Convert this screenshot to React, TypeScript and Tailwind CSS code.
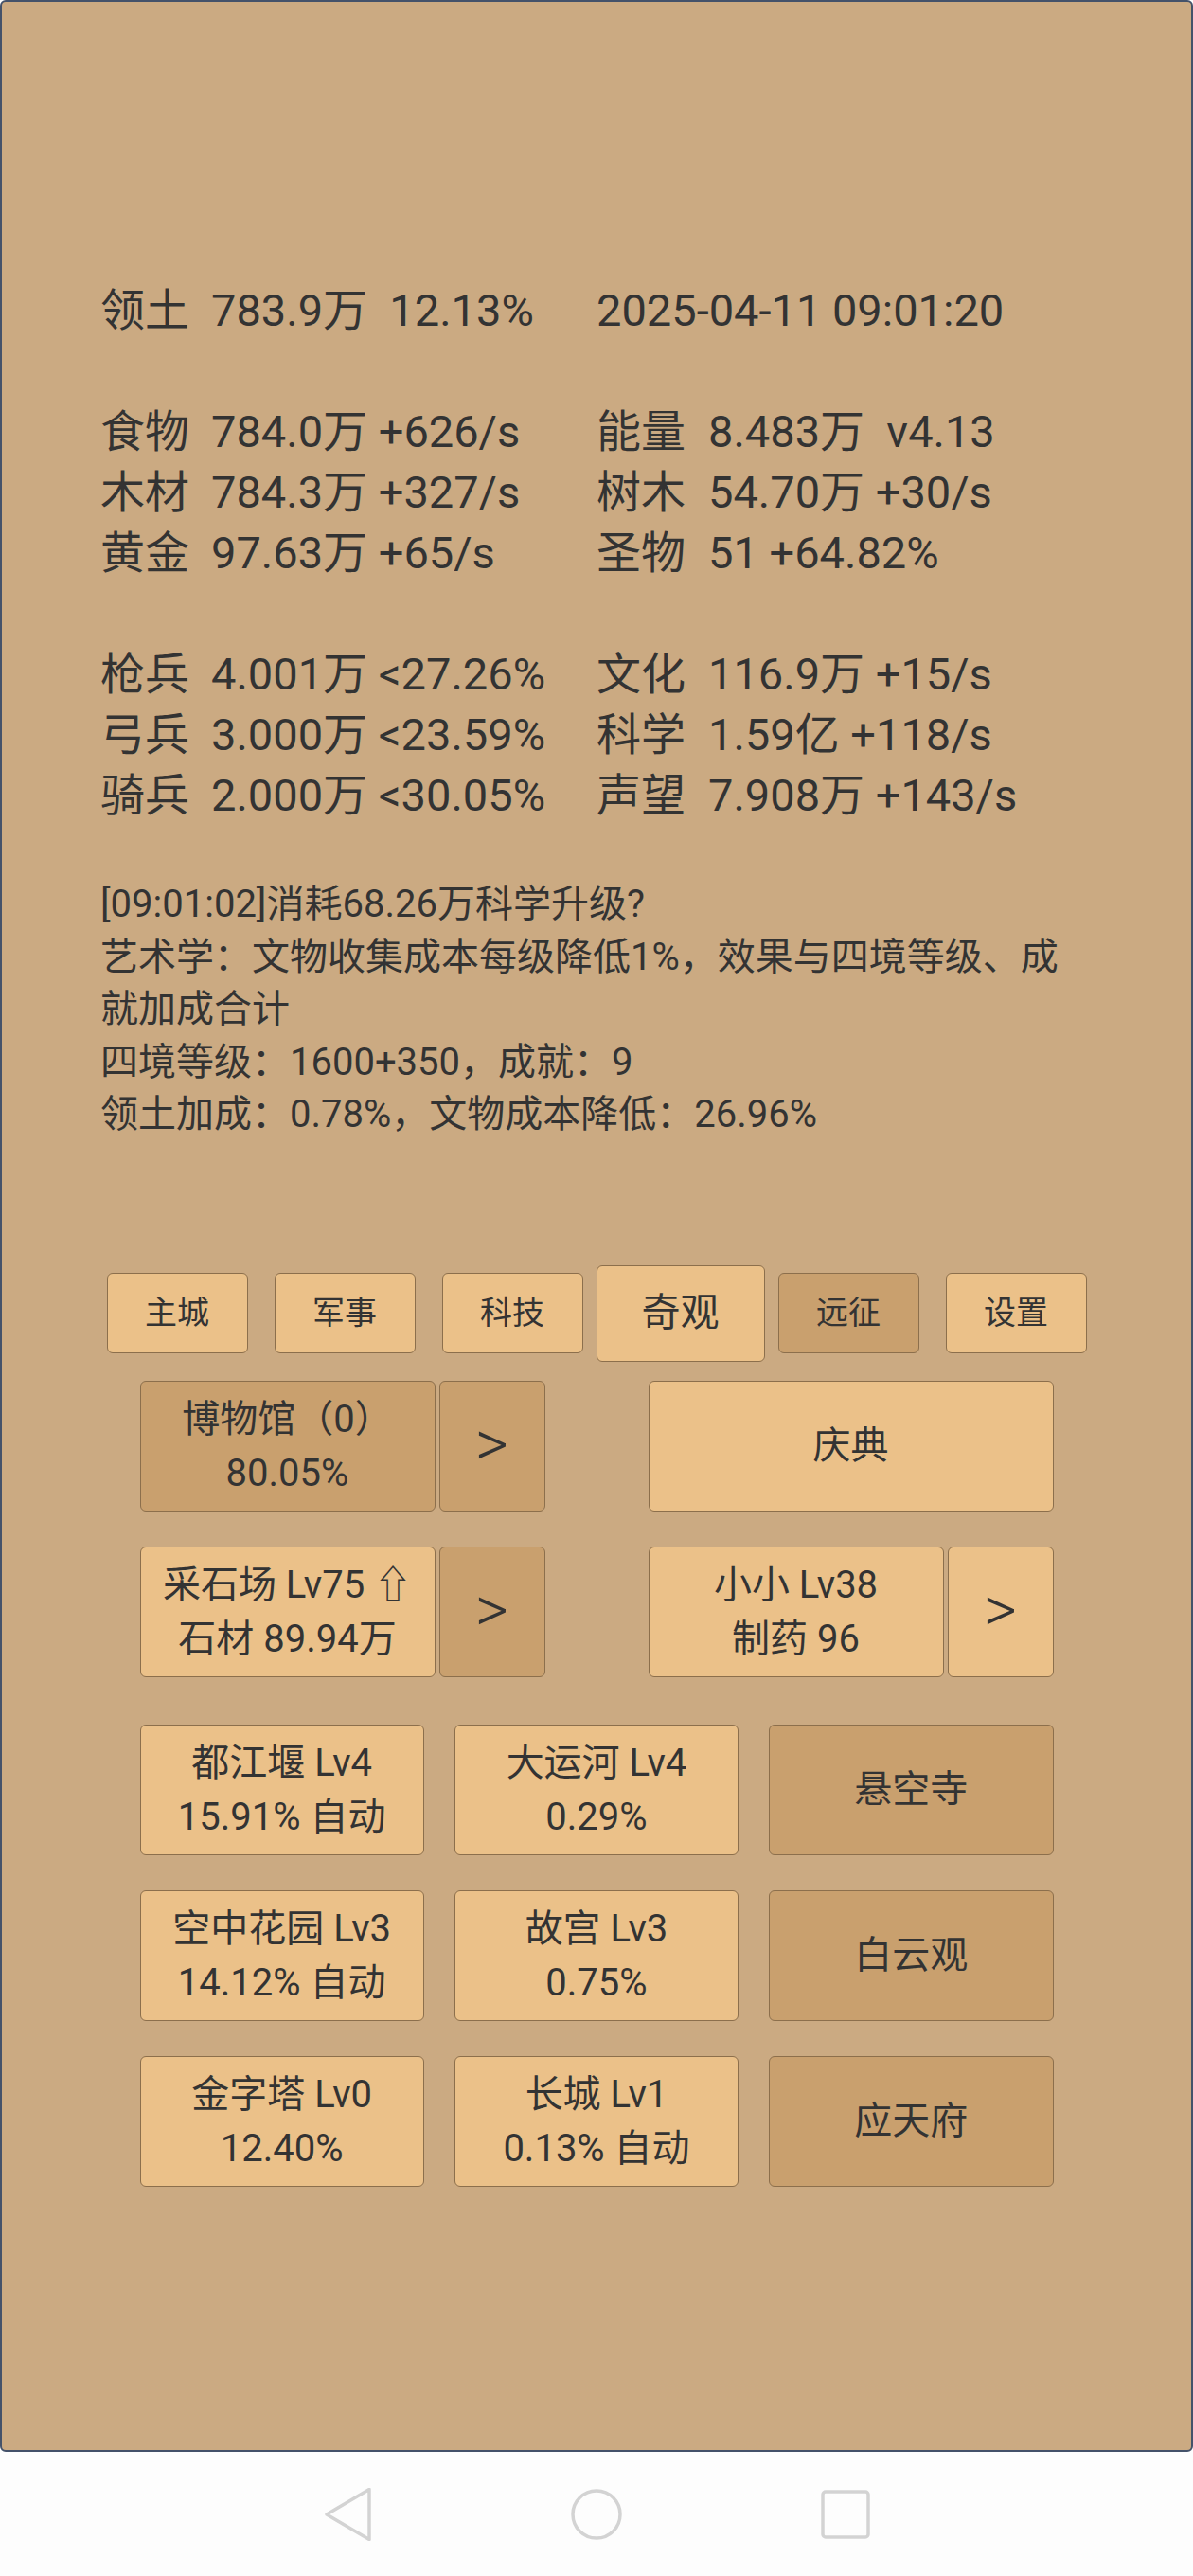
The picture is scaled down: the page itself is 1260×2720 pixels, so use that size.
import React from 'react';

// --- Data ---
const STATS: [string, string, string, string][] = [
  ['领土', '783.9万  12.13%', '', '2025-04-11 09:01:20'],
  ['', '', '', ''],
  ['食物', '784.0万 +626/s', '能量', '8.483万  v4.13'],
  ['木材', '784.3万 +327/s', '树木', '54.70万 +30/s'],
  ['黄金', '97.63万 +65/s', '圣物', '51 +64.82%'],
  ['', '', '', ''],
  ['枪兵', '4.001万 <27.26%', '文化', '116.9万 +15/s'],
  ['弓兵', '3.000万 <23.59%', '科学', '1.59亿 +118/s'],
  ['骑兵', '2.000万 <30.05%', '声望', '7.908万 +143/s'],
];

const TABS = [
  { name: '主城', state: 'normal' },
  { name: '军事', state: 'normal' },
  { name: '科技', state: 'normal' },
  { name: '奇观', state: 'active' },
  { name: '远征', state: 'dim' },
  { name: '设置', state: 'normal' },
];

const WONDERS: { lines: string[]; dark?: boolean }[] = [
  { lines: ['都江堰 Lv4', '15.91% 自动'] },
  { lines: ['大运河 Lv4', '0.29%'] },
  { lines: ['悬空寺'], dark: true },
  { lines: ['空中花园 Lv3', '14.12% 自动'] },
  { lines: ['故宫 Lv3', '0.75%'] },
  { lines: ['白云观'], dark: true },
  { lines: ['金字塔 Lv0', '12.40%'] },
  { lines: ['长城 Lv1', '0.13% 自动'] },
  { lines: ['应天府'], dark: true },
];

// --- Helper Components ---
const Btn = ({
  lines,
  dark = false,
  className = '',
}: {
  lines: string[];
  dark?: boolean;
  className?: string;
}) => (
  <div
    className={`flex flex-col items-center justify-center rounded-[6px] border-[1.5px] border-[#8c6f4c] text-[40px] leading-[57px] ${
      dark ? 'bg-[#c9a06e]' : 'bg-[#ebc189]'
    } ${className}`}
  >
    {lines.map((l) => (
      <span key={l} className="whitespace-pre">
        {l}
      </span>
    ))}
  </div>
);

const Arrow = ({ dark = false }: { dark?: boolean }) => (
  <div
    className={`flex w-[112px] items-center justify-center rounded-[6px] border-[1.5px] border-[#8c6f4c] text-[68px] font-light leading-none ${
      dark ? 'bg-[#c9a06e]' : 'bg-[#ebc189]'
    }`}
  >
    <span className="-mt-[4px]">&gt;</span>
  </div>
);

const NavBar = () => (
  <div className="flex flex-1 items-center justify-center gap-[207px] bg-[#fdfdfd]">
    <svg width="56" height="56" viewBox="0 0 56 56" fill="none" stroke="#d3d3d3" strokeWidth="3.5" strokeLinejoin="round">
      <path d="M51 1.5 L6 28 L51 54.5 Z" />
    </svg>
    <svg width="56" height="56" viewBox="0 0 56 56" fill="none" stroke="#d3d3d3" strokeWidth="3.5">
      <circle cx="28" cy="28" r="25" />
    </svg>
    <svg width="56" height="56" viewBox="0 0 56 56" fill="none" stroke="#d3d3d3" strokeWidth="3.5">
      <rect x="4" y="4" width="48" height="48" rx="3" />
    </svg>
  </div>
);

// --- Main Component ---
export default function App() {
  return (
    <div className="flex h-[2720px] w-[1260px] flex-col bg-[#fdfdfd] font-[Roboto,'Noto_Sans_CJK_SC',sans-serif] text-[#333333]">
      <div className="flex h-[2589px] flex-col rounded-[6px] border-2 border-[#44526a] bg-[#cbaa82]">
        {/* Stats */}
        <div className="grid grid-cols-[524px_1fr] pl-[104px] pt-[294px] text-[47px] leading-[64px]">
          {STATS.map(([l1, v1, l2, v2], i) => (
            <React.Fragment key={i}>
              <div className="h-[64px] whitespace-pre">
                {l1 && <span className="inline-block w-[117px]">{l1}</span>}
                {v1}
              </div>
              <div className="h-[64px] whitespace-pre">
                {l2 && <span className="inline-block w-[118px]">{l2}</span>}
                {v2}
              </div>
            </React.Fragment>
          ))}
        </div>

        {/* Log */}
        <div className="mt-[55px] px-[104px] text-[40px] leading-[55.5px]">
          <p>[09:01:02]消耗68.26万科学升级?</p>
          <p>艺术学：文物收集成本每级降低1%，效果与四境等级、成就加成合计</p>
          <p>四境等级：1600+350，成就：9</p>
          <p>领土加成：0.78%，文物成本降低：26.96%</p>
        </div>

        {/* Tabs */}
        <div className="mt-[131px] flex items-center justify-center">
          {TABS.map((t) =>
            t.state === 'active' ? (
              <div
                key={t.name}
                className="flex h-[102px] w-[178px] items-center justify-center rounded-[6px] border-[1.5px] border-[#8c6f4c] bg-[#ebc189] text-[41px]"
              >
                {t.name}
              </div>
            ) : (
              <div
                key={t.name}
                className={`mx-[14px] flex h-[85px] w-[149px] items-center justify-center rounded-[6px] border-[1.5px] border-[#8c6f4c] text-[34px] ${
                  t.state === 'dim' ? 'bg-[#c9a06e]' : 'bg-[#ebc189]'
                }`}
              >
                {t.name}
              </div>
            )
          )}
        </div>

        {/* Buildings */}
        <div className="mx-auto mt-[20px] flex w-[965px] flex-col gap-[37px]">
          <div className="flex h-[138px] justify-between">
            <div className="flex gap-[4px]">
              <Btn lines={['博物馆（0）', '80.05%']} dark className="w-[312px]" />
              <Arrow dark />
            </div>
            <Btn lines={['庆典']} className="w-[428px]" />
          </div>
          <div className="flex h-[138px] justify-between">
            <div className="flex gap-[4px]">
              <Btn lines={['采石场 Lv75 ⇧', '石材 89.94万']} className="w-[312px]" />
              <Arrow dark />
            </div>
            <div className="flex gap-[4px]">
              <Btn lines={['小小 Lv38', '制药 96']} className="w-[312px]" />
              <Arrow />
            </div>
          </div>
        </div>

        {/* Wonders */}
        <div className="mx-auto mt-[50px] grid w-[965px] grid-cols-3 gap-x-[32px] gap-y-[37px]">
          {WONDERS.map((w) => (
            <Btn key={w.lines[0]} lines={w.lines} dark={w.dark} className="h-[138px]" />
          ))}
        </div>
      </div>

      <NavBar />
    </div>
  );
}
